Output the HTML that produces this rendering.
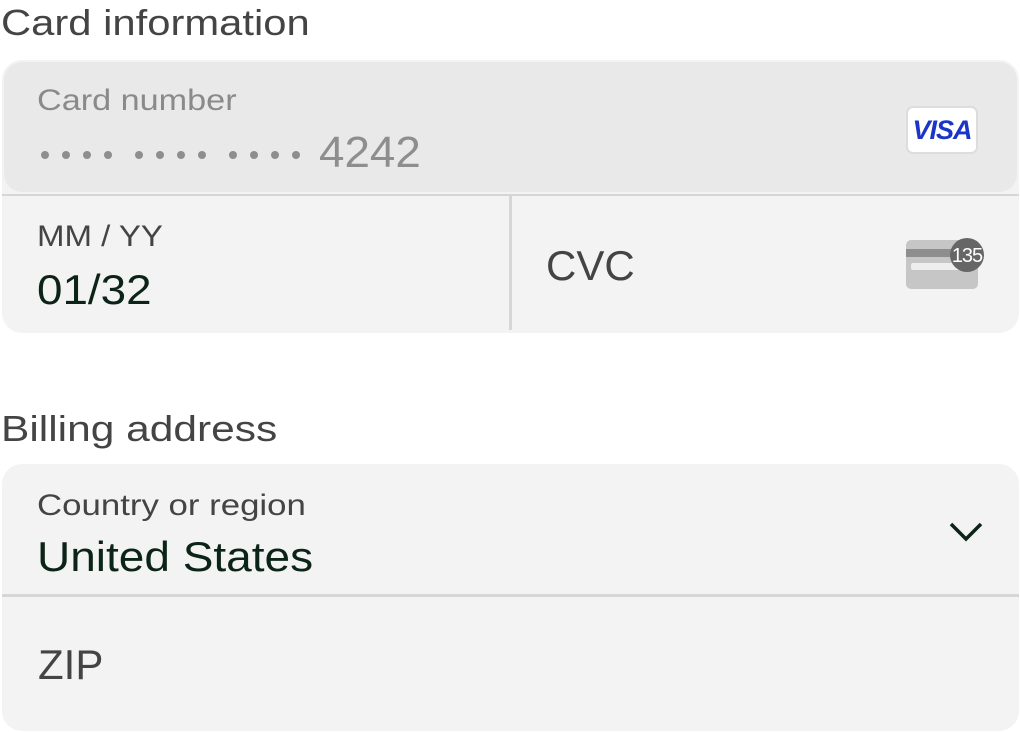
<!DOCTYPE html>
<html><head><style>
*{margin:0;padding:0;box-sizing:border-box}
body{width:1020px;height:732px;background:#fff;font-family:"Liberation Sans",sans-serif;position:relative;overflow:hidden}
.a{position:absolute;white-space:nowrap;transform-origin:0 0}
.t{font-size:36px;color:#444}
.lbl{font-size:30px;color:#666}
.val{font-size:42px;color:#0c2418}
</style></head><body>
<div class="a t" style="left:1px;top:2px;transform:scaleX(1.16)">Card information</div>
<div class="a" style="left:2px;top:60px;width:1017px;height:273px;background:#f3f3f3;border-radius:20px;overflow:hidden">
  <div class="a" style="left:0;top:0;width:1017px;height:134px;background:#e9e9e9;border-radius:20px;border:2px solid #f3f3f3"></div>
  <div class="a" style="left:0;top:134px;width:1017px;height:2px;background:#d6d6d6"></div>
  <div class="a" style="left:507px;top:136px;width:3px;height:134px;background:#d6d6d6"></div>
</div>
<div class="a lbl" style="left:37px;top:84px;color:#8a8a8a;transform:scaleX(1.14)">Card number</div>
<svg class="a" style="left:36px;top:145px" width="280" height="20" viewBox="0 0 280 20" fill="#8e8e8e">
<circle cx="9" cy="10" r="4"/><circle cx="30" cy="10" r="4"/><circle cx="51" cy="10" r="4"/><circle cx="72" cy="10" r="4"/>
<circle cx="103" cy="10" r="4"/><circle cx="124" cy="10" r="4"/><circle cx="145" cy="10" r="4"/><circle cx="166" cy="10" r="4"/>
<circle cx="197" cy="10" r="4"/><circle cx="218" cy="10" r="4"/><circle cx="239" cy="10" r="4"/><circle cx="260" cy="10" r="4"/>
</svg>
<div class="a" style="left:319px;top:128px;font-size:44px;color:#8e8e8e;transform:scaleX(1.04)">4242</div>
<div class="a" style="left:906px;top:106px;width:72px;height:48px;background:#fff;border:2px solid #ddd;border-radius:7px;text-align:center;font:italic bold 27px 'Liberation Sans',sans-serif;color:#1a35c8;line-height:44px;letter-spacing:-1px">VISA</div>
<div class="a lbl" style="left:37px;top:220px;color:#444;transform:scaleX(1.1)">MM / YY</div>
<div class="a val" style="left:37px;top:266px;transform:scaleX(1.09)">01/32</div>
<div class="a" style="left:546px;top:242px;font-size:42px;color:#444">CVC</div>
<svg class="a" style="left:900px;top:236px" width="90" height="58" viewBox="0 0 90 58">
<rect x="6" y="4" width="72" height="49" rx="5" fill="#c6c6c6"/>
<rect x="6" y="13" width="72" height="8" fill="#8e8e8e"/>
<rect x="11" y="27" width="56" height="7" rx="2" fill="#eee"/>
<circle cx="67" cy="19" r="17" fill="#666"/>
<text x="67" y="26" text-anchor="middle" font-family="Liberation Sans" font-size="20" fill="#fff" letter-spacing="-1">135</text>
</svg>
<div class="a t" style="left:1px;top:408px;transform:scaleX(1.18)">Billing address</div>
<div class="a" style="left:2px;top:464px;width:1017px;height:267px;background:#f3f3f3;border-radius:20px;overflow:hidden">
  <div class="a" style="left:0;top:130px;width:1017px;height:3px;background:#d6d6d6"></div>
</div>
<div class="a lbl" style="left:37px;top:489px;color:#444;transform:scaleX(1.16)">Country or region</div>
<div class="a val" style="left:37px;top:533px;transform:scaleX(1.095)">United States</div>
<svg class="a" style="left:948px;top:520px" width="36" height="24" viewBox="0 0 36 24"><path d="M3 4 L18 19 L33 4" fill="none" stroke="#0c2418" stroke-width="3.5"/></svg>
<div class="a" style="left:38px;top:641px;font-size:42px;color:#444">ZIP</div>
</body></html>
